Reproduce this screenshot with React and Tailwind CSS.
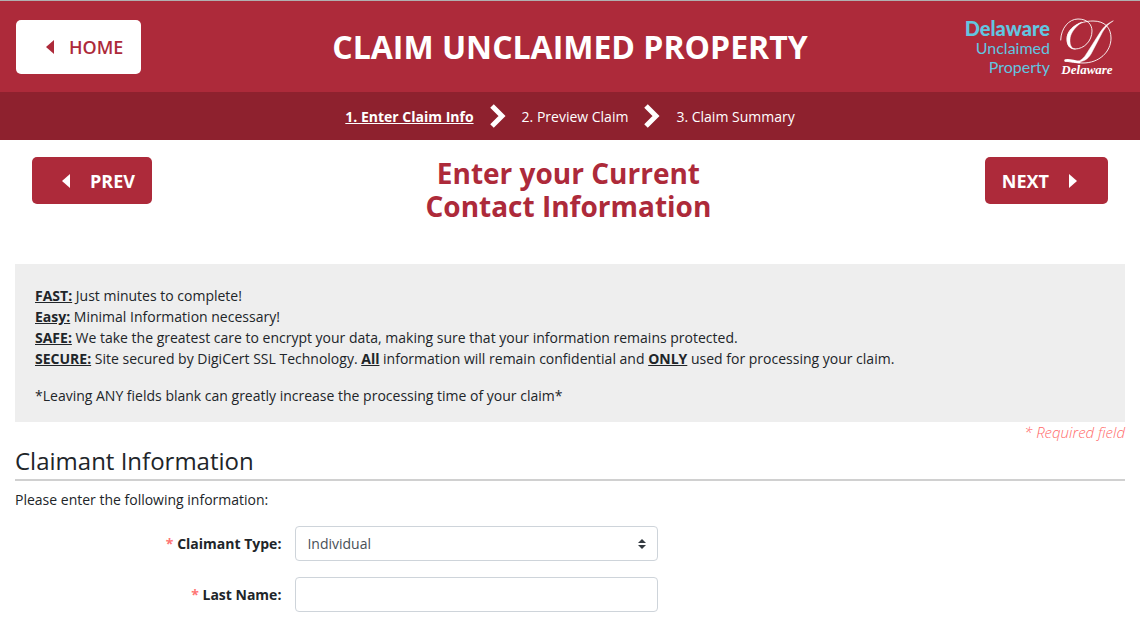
import { useState } from 'react';

const steps = ['1. Enter Claim Info', '2. Preview Claim', '3. Claim Summary'];

const CaretLeft = () => (
    <svg viewBox="0 0 8 14" className="w-2 h-3.5" fill="currentColor" aria-hidden="true">
        <path d="M8 0v14L0 7z" />
    </svg>
);

const CaretRight = () => (
    <svg viewBox="0 0 8 14" className="w-2 h-3.5" fill="currentColor" aria-hidden="true">
        <path d="M0 0v14l8-7z" />
    </svg>
);

const StepArrow = () => (
    <svg viewBox="0 0 16 24" className="w-4 h-6" fill="none" stroke="#fff" strokeWidth="5" aria-hidden="true">
        <path d="M2 2l10 10L2 22" />
    </svg>
);

const Logo = () => (
    <a href="#home" className="flex items-start gap-2.5">
        <span className="flex flex-col items-end font-['Lato',sans-serif] text-[#62c5e0] text-base leading-[19px]">
            <span className="text-xl leading-5 font-black">Delaware</span>
            <span>Unclaimed</span>
            <span>Property</span>
        </span>
        <span className="flex flex-col items-center text-white">
            <svg viewBox="0 0 54 46" className="w-[54px] h-[46px]" fill="none" stroke="currentColor" strokeLinecap="round" aria-hidden="true">
                <path d="M0.7 22C1 10 9 1 18 1c9 0 14 5 14 12 0 10-8 18-17 18-5 0-8-4-8-10C7 10 20 3 33 3c12 0 18 7 18 17 0 14-12 25-28 25-7 0-12-1-18-2" strokeWidth="0.9" />
                <path d="M15 31C9 31 7 27 7 21 7 14 13 7 22 4 14 10 10 16 10 22c0 5 1 8 5 9z" fill="currentColor" strokeWidth="0.4" />
                <path d="M53 3C46 6 43 10 39 16L27 35c-3 5-6 8-11 9 8 0 12-3 15-8L41 17C44 11 47 7 53 3z" fill="currentColor" strokeWidth="0.5" />
                <path d="M5.500 42.500c4-1 8 1 14 1.500" strokeWidth="2.4" />
            </svg>
            <span className="font-['Liberation_Serif',serif] italic font-bold text-[13px] leading-3">Delaware</span>
        </span>
    </a>
);

const Field = ({ id, label, children }) => (
    <div className="flex items-center gap-3.5">
        <label htmlFor={id} className="w-[24%] text-right font-bold">
            <span className="text-[#ff7575]">*</span> {label}:
        </label>
        <div className="relative w-full max-w-[363px]">{children}</div>
    </div>
);

const App = () => {
    const [claimantType, setClaimantType] = useState('Individual');
    const [lastName, setLastName] = useState('');

    return (
        <div className="font-['Open_Sans',sans-serif] text-sm leading-[21px] text-[#212529] bg-white">
            <header className="grid grid-cols-[1fr_auto_1fr] items-start border-t border-[#b0b0b0] bg-[#ad2a3a] px-4 pt-[19px] pb-[18px]">
                <button type="button" className="justify-self-start flex items-center gap-[15px] h-[54px] pl-[30px] pr-[18px] rounded-[5px] bg-white text-[#ad2a3a] text-lg font-semibold">
                    <CaretLeft />
                    HOME
                </button>
                <h1 className="self-center text-[32px] leading-10 font-bold text-white">CLAIM UNCLAIMED PROPERTY</h1>
                <div className="justify-self-end -my-0.5 pr-2.5">
                    <Logo />
                </div>
            </header>

            <nav className="bg-[#8e212e] text-white">
                <ol className="flex items-center justify-center h-12 gap-4">
                    {steps.map((step, i) => (
                        <li key={step} className="flex items-center gap-4">
                            {i > 0 && <StepArrow />}
                            <a href={`#step-${i + 1}`} className={i === 0 ? 'font-bold underline' : ''}>{step}</a>
                        </li>
                    ))}
                </ol>
            </nav>

            <main className="px-[15px] pb-3">
                <div className="flex items-start justify-between px-[17px] pt-[17px]">
                    <button type="button" className="flex items-center gap-5 h-[47px] pl-[30px] pr-[17px] rounded-[5px] bg-[#ad2a3a] text-white text-lg font-bold">
                        <CaretLeft />
                        PREV
                    </button>
                    <h2 className="text-center text-[28px] leading-[33px] font-bold text-[#ad2a3a]">
                        Enter your Current<br />Contact Information
                    </h2>
                    <button type="button" className="flex items-center gap-5 h-[47px] pl-[17px] pr-[31px] rounded-[5px] bg-[#ad2a3a] text-white text-lg font-bold">
                        NEXT
                        <CaretRight />
                    </button>
                </div>

                <section className="mt-[41px] px-5 pt-[21px] pb-4 bg-[#eee]">
                    <p><b className="underline">FAST:</b> Just minutes to complete!</p>
                    <p><b className="underline">Easy:</b> Minimal Information necessary!</p>
                    <p><b className="underline">SAFE:</b> We take the greatest care to encrypt your data, making sure that your information remains protected.</p>
                    <p><b className="underline">SECURE:</b> Site secured by DigiCert SSL Technology. <b className="underline">All</b> information will remain confidential and <b className="underline">ONLY</b> used for processing your claim.</p>
                    <p className="mt-4">*Leaving ANY fields blank can greatly increase the processing time of your claim*</p>
                </section>

                <p className="text-right text-[15px] italic font-light text-[#ff6b6b]">* Required field</p>

                <form onSubmit={(e) => e.preventDefault()}>
                    <h3 className="pt-1 pb-1 text-2xl leading-7 border-b-2 border-[#d0d0d0]">Claimant Information</h3>
                    <p className="mt-2">Please enter the following information:</p>

                    <div className="mt-4 flex flex-col gap-4">
                        <Field id="claimant-type" label="Claimant Type">
                            <select
                                id="claimant-type"
                                value={claimantType}
                                onChange={(e) => setClaimantType(e.target.value)}
                                className="block w-full h-[35px] px-[11px] appearance-none rounded border border-[#ced4da] bg-white text-[#495057]"
                            >
                                <option>Individual</option>
                                <option>Business</option>
                            </select>
                            <svg viewBox="0 0 4 5" className="absolute right-3 top-[13px] w-2 h-2.5 pointer-events-none" fill="#343a40" aria-hidden="true">
                                <path d="M2 0L0 2h4zm0 5L0 3h4z" />
                            </svg>
                        </Field>
                        <Field id="last-name" label="Last Name">
                            <input
                                id="last-name"
                                type="text"
                                value={lastName}
                                onChange={(e) => setLastName(e.target.value)}
                                className="block w-full h-[35px] px-[11px] rounded border border-[#ced4da] bg-white text-[#495057]"
                            />
                        </Field>
                    </div>
                </form>
            </main>
        </div>
    );
};

export default App;
